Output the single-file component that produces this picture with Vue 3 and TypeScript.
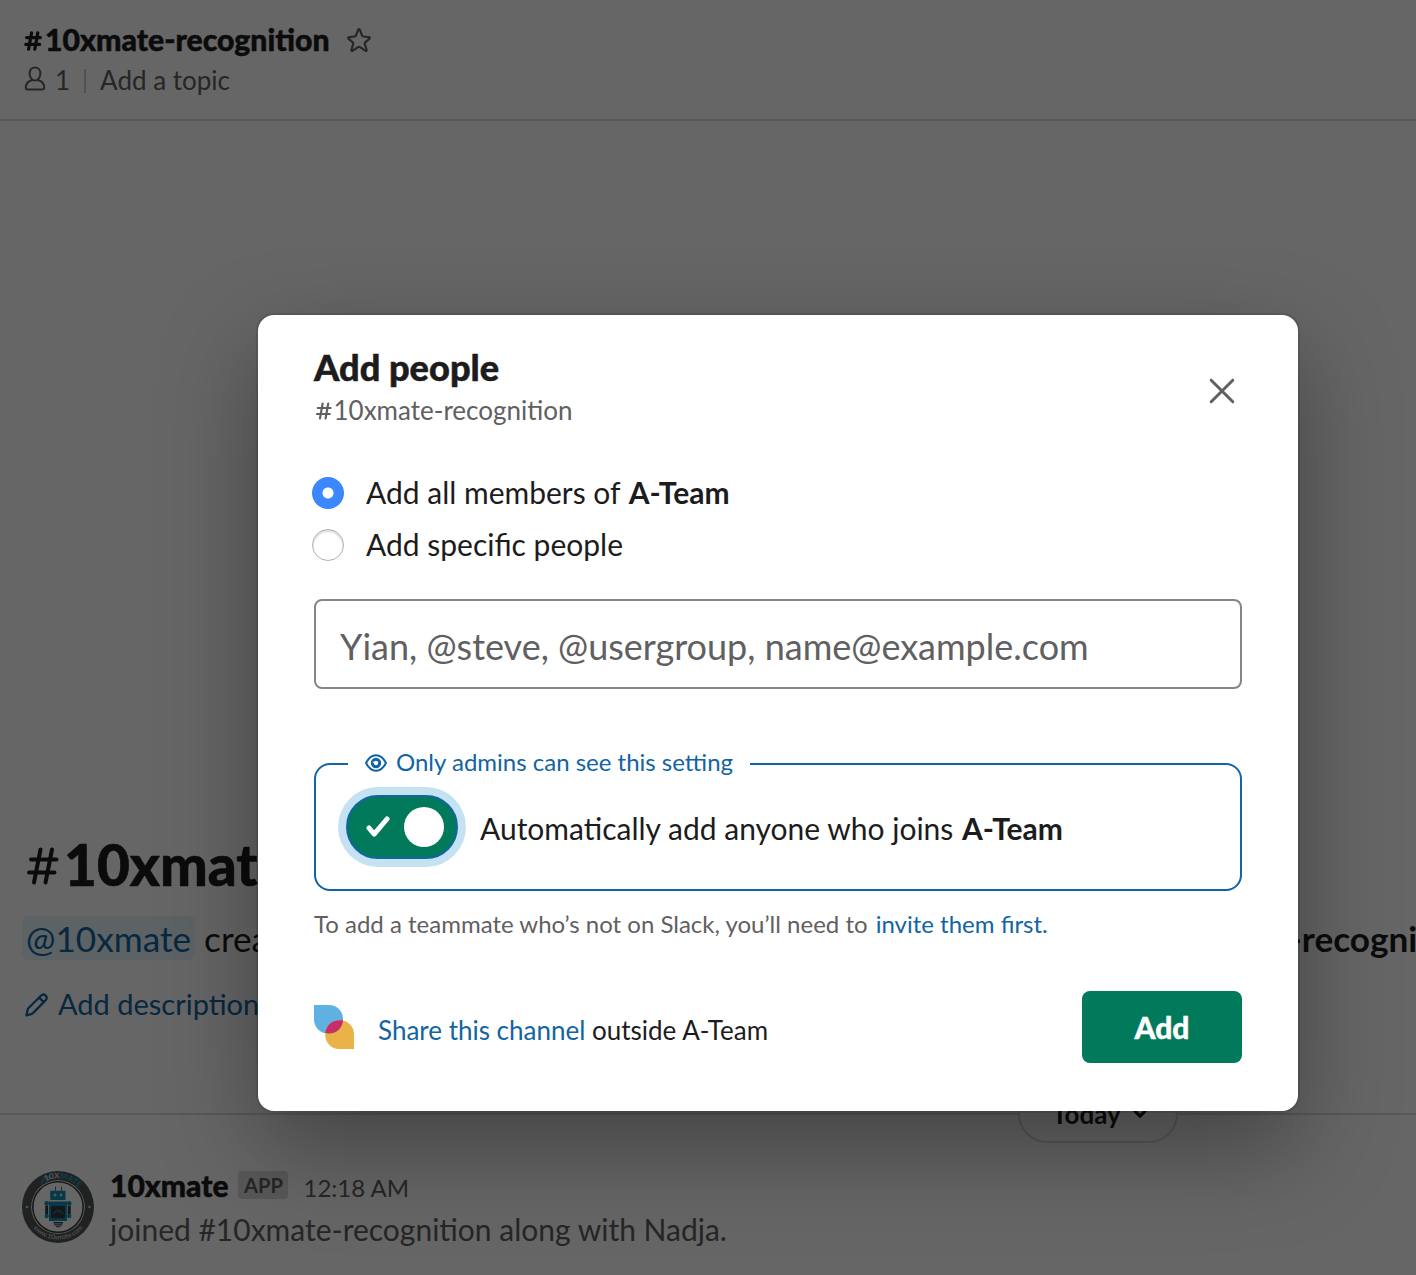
<script setup lang="ts">
import { ref } from 'vue'

const channel = '10xmate-recognition'
const team = 'A-Team'
const audience = ref<'all' | 'specific'>('all')
const autoAdd = ref(true)
const people = ref('')
</script>

<template>
  <div class="app">
    <div class="workspace">
      <header class="channel-header">
        <div class="channel-name">
          <svg class="hash" width="18" height="20" viewBox="0 0 18 20"><path d="M7.600 1.800 4.600 18.200M13.800 1.800 10.800 18.200M2.600 6.600H16.400M1.800 13.400H15.600" /></svg>
          <span>{{ channel }}</span>
          <svg class="star" width="26" height="26" viewBox="0 0 26 26"><path d="M12.100 2.900Q13 1.400 13.900 2.900L16.100 8.600Q16.400 9.400 17.200 9.500L22.700 10.100Q24.700 10.400 23.300 11.900L19.200 15.300Q18.500 16 18.700 16.900L20.600 22.500Q21 24.500 19.200 23.700L14 20.200Q13 19.500 12 20.200L6.800 23.700Q5 24.500 5.400 22.500L7.300 16.900Q7.500 16 6.800 15.300L2.700 11.900Q1.300 10.400 3.300 10.100L8.800 9.500Q9.600 9.400 9.900 8.600Z" /></svg>
        </div>
        <div class="channel-meta">
          <svg width="22" height="26" viewBox="0 0 22 26"><path d="M11 1.500C7.800 1.500 5.600 4 5.600 7.400c0 3.600 2.400 7.200 5.400 7.200s5.400-3.600 5.400-7.200C16.400 4 14.200 1.500 11 1.500ZM7.600 14.200C4 15.300 1.800 17.800 1.800 21.600c0 1.200.7 1.900 1.900 1.900h14.600c1.200 0 1.900-.7 1.900-1.900 0-3.800-2.200-6.300-5.800-7.400" /></svg>
          <span class="count">1</span>
          <i class="sep"></i>
          <span>Add a topic</span>
        </div>
      </header>

      <section class="intro">
        <h1>
          <svg width="32" height="38" viewBox="0 0 32 38"><path d="M13.500 2.500 7 35.500M25 2.500 18.500 35.500M4 12.500H29.500M2 25.500H27.500" /></svg>
          <span>{{ channel }}</span>
        </h1>
        <p class="created">
          <span><a class="mention">@10xmate</a> created this channel today.</span>
          <strong>#{{ channel }}</strong>
        </p>
        <p class="describe">
          <svg width="24" height="24" viewBox="0 0 24 24"><path d="M1.400 22.400 2.600 16.800Q2.900 15.600 3.800 14.700L15.900 2.800c1.700-1.600 3.300-1.600 4.700-.2 1.500 1.500 1.500 3.100-.2 4.800L8.500 19.600Q7.600 20.600 6.200 21.100ZM14.200 4.600 18.800 9.200" /></svg>
          <span>Add description</span>
        </p>
      </section>

      <div class="day-divider">
        <div class="day-pill">
          Today
          <svg width="14" height="10" viewBox="0 0 14 10"><path d="M1.800 2 7 7.200 12.200 2" /></svg>
        </div>
      </div>

      <article class="message">
        <svg class="avatar" width="72" height="72" viewBox="0 0 72 72">
          <defs>
            <path id="arc-top" d="M7.500 36A28.500 28.500 0 0 1 64.500 36" />
            <path id="arc-bottom" d="M3.500 36A32.500 32.500 0 0 0 68.500 36" />
          </defs>
          <circle cx="36" cy="36" r="36" fill="#505555" />
          <circle cx="36" cy="36" r="26.800" fill="#fff" />
          <circle cx="36" cy="36" r="25.200" fill="none" stroke="#3c4040" stroke-width="1.600" />
          <path d="M19.500 11.500 23.500 5.500 24.500 8 27.500 4.500V8.500" fill="none" stroke="#18a4c8" stroke-width="1.500" />
          <text class="badge-name" text-anchor="middle"><textPath href="#arc-top" startOffset="56%"><tspan fill="#ddd">10X</tspan><tspan fill="#18a4c8">MATE</tspan></textPath></text>
          <text class="badge-url" text-anchor="middle" fill="#ddd"><textPath href="#arc-bottom" startOffset="50%">www.10xmate.com</textPath></text>
          <circle cx="5" cy="36" r="1.300" fill="#9ed9f0" /><circle cx="67.500" cy="36" r="1.300" fill="#9ed9f0" />
          <g fill="#1690b4">
            <path d="M33 15.500h1v4.200h5v-4.200h1v4.200h3.500V29H28.200v-9.300H33zM27 30.500h18v5H27zM27 47h18v3H27zM27 35h2v13h-2zM43 35h2v13h-2z" />
            <circle cx="24.700" cy="32.300" r="2.300" /><circle cx="47.200" cy="32.300" r="2.300" />
            <circle cx="24.700" cy="45" r="2.200" /><circle cx="47.200" cy="45" r="2.200" />
          </g>
          <g fill="#343b3e"><path d="M29 35h14v12.300H29zM23.200 34.500h3v8.500h-3zM45.700 34.500h3v8.500h-3zM31.500 51h9.500v1.500h-9.500zM32.200 53.200h8v1.300h-8zM34 55.200h4.500v1H34z" /></g>
          <path d="m31.500 43 3.300-4.200 1.500 2.600 1.900-2.400 2.600 4" fill="none" stroke="#1690b4" />
          <circle cx="33" cy="24" r="1.400" fill="#bce6f2" /><circle cx="39" cy="24" r="1.400" fill="#bce6f2" />
        </svg>
        <div class="message-body">
          <div class="message-head">
            <b>10xmate</b><span class="app-tag">APP</span><time>12:18 AM</time>
          </div>
          <p>joined #{{ channel }} along with Nadja.</p>
        </div>
      </article>
    </div>

    <div class="overlay"></div>

    <div class="modal" role="dialog">
      <header class="modal-head">
        <div>
          <h2>Add people</h2>
          <div class="modal-channel">
            <svg width="16" height="18" viewBox="0 0 16 18"><path d="M6.600 1.600 4 16.400M12.200 1.600 9.600 16.400M1.800 6H14.600M1 12H13.800" /></svg>
            <span>{{ channel }}</span>
          </div>
        </div>
        <svg class="close" width="26" height="26" viewBox="0 0 26 26"><path d="M2.200 2.200 23.800 23.800M23.800 2.200 2.200 23.800" /></svg>
      </header>

      <div class="choices">
        <label class="choice" @click="audience = 'all'">
          <span class="radio" :class="{ on: audience === 'all' }"></span>
          <span class="choice-text">Add all members of <b>{{ team }}</b></span>
        </label>
        <label class="choice" @click="audience = 'specific'">
          <span class="radio" :class="{ on: audience === 'specific' }"></span>
          <span class="choice-text">Add specific people</span>
        </label>
      </div>

      <input v-model="people" class="people" type="text" placeholder="Yian, @steve, @usergroup, name@example.com" />

      <div class="admin-box">
        <div class="admin-legend">
          <svg width="22" height="18" viewBox="0 0 22 18"><path d="M1 9C3.600 4 7 1.300 11 1.300S18.400 4 21 9C18.400 14 15 16.700 11 16.700S3.600 14 1 9Z" /><circle cx="11" cy="9" r="3.700" stroke-width="3" /><path d="M8.200 8.200 10.600 8.800" stroke="#fff" stroke-width="1" /></svg>
          <span>Only admins can see this setting</span>
        </div>
        <div class="toggle-row">
          <button class="toggle" type="button" role="switch" :aria-checked="autoAdd" @click="autoAdd = !autoAdd">
            <svg width="24" height="22" viewBox="0 0 24 22"><path d="M3 12 8.200 18.200 21 3" /></svg>
            <span class="knob"></span>
          </button>
          <span class="auto-text">Automatically add anyone who joins <b>{{ team }}</b></span>
        </div>
      </div>

      <p class="hint">To add a teammate who’s not on Slack, you’ll need to <a>invite them first.</a></p>

      <footer class="modal-foot">
        <svg width="40" height="44" viewBox="0 0 40 44">
          <path fill="#5fb1e1" d="M0 0H15A14 14 0 0 1 29 14V15A14 14 0 0 1 15 28.500H14A14 14 0 0 1 0 14.500Z" />
          <path fill="#e9b347" d="M40 44H25.500A14 14 0 0 1 11.200 30V29A14 14 0 0 1 25.500 15.200H26A14 14 0 0 1 40 29.500Z" />
          <path fill="#c52e66" d="M11.200 28.100C12 20.500 18 15.200 25.500 15.200H29C28.500 22.500 23 28.500 15 28.500Q13 28.500 11.200 28.100Z" />
        </svg>
        <p><a>Share this channel</a> outside {{ team }}</p>
        <button class="add" type="button">Add</button>
      </footer>
    </div>
  </div>
</template>

<style>
body { background: #666; }
</style>

<style scoped>
* { box-sizing: border-box; }
.app {
  position: relative;
  width: 1416px;
  height: 1275px;
  overflow: hidden;
  background: #fff;
  color: #1d1c1d;
  font: 400 30px/44px Lato, "Liberation Sans", sans-serif;
}
h1, h2, p { margin: 0; }
svg { flex: none; fill: none; stroke: none; stroke-linecap: round; stroke-linejoin: round; }
a { color: #1264a3; }
b, strong { font-weight: 700; }
.overlay { position: absolute; inset: 0; background: rgba(0, 0, 0, .6); }
.workspace { display: flex; flex-direction: column; height: 100%; }

.channel-header { height: 121px; padding: 20px 24px 0; border-bottom: 2px solid #ddd; }
.channel-name { display: flex; align-items: center; height: 38px; font-size: 30.200px; font-weight: 900; -webkit-text-stroke: .5px; }
.hash { margin: 4px 3px 0 0; stroke: #1d1c1d; stroke-width: 3.200; }
.star { margin: 2px 0 0 16px; stroke: #616061; stroke-width: 2.200; }
.channel-meta { display: flex; align-items: center; height: 44px; color: #616061; font-size: 26px; }
.channel-meta svg { margin-bottom: 3px; stroke: #616061; stroke-width: 2; }
.count { margin-left: 9px; }
.sep { width: 2px; height: 24px; margin: 2px 14px 0; background: #ccc; }

.intro { padding: 710px 0 0 24px; white-space: nowrap; }
h1 { display: flex; align-items: center; height: 66px; font-size: 56.700px; font-weight: 900; -webkit-text-stroke: .6px; }
h1 svg { margin: 4px 5px 0 3px; stroke: #1d1c1d; stroke-width: 4; }
.created { display: flex; justify-content: space-between; width: 1458px; margin: 18px 0 0 -2px; font-size: 35.200px; line-height: 46px; }
.mention { padding: 1px 4px; border-radius: 6px; background: #e8f5fa; }
.describe { display: flex; align-items: center; height: 44px; margin-top: 21px; color: #1264a3; font-size: 29px; }
.describe svg { margin: 1px 9px 0 1px; stroke: #1264a3; stroke-width: 2.300; }

.day-divider { display: flex; height: 58px; margin-top: 59px; background: linear-gradient(#ddd, #ddd) 0 28px / 100% 2px no-repeat; }
.day-pill { display: flex; align-items: center; gap: 12px; width: 160px; height: 58px; margin-left: 1018px; padding-left: 32px; border: 2px solid #ddd; border-radius: 29px; background: #fff; font-size: 26px; font-weight: 700; }
.day-pill svg { stroke: #1d1c1d; stroke-width: 3.200; }

.message { display: flex; gap: 16px; padding: 20px 22px 0; }
.avatar { margin-top: 8px; }
.badge-name { font: 700 8px Lato, sans-serif; }
.badge-url { font: 400 6.600px Lato, sans-serif; }
.message-head { display: flex; align-items: center; height: 44px; }
.message-head b { font-weight: 900; -webkit-text-stroke: .5px; }
.app-tag { width: 50px; height: 28px; margin: 0 16px 0 10px; border-radius: 4px; background: #ddd; color: #616061; font-size: 20.200px; font-weight: 700; line-height: 29px; text-align: center; }
time { padding-top: 5px; margin-left: -1px; color: #616061; font-size: 24px; line-height: 48px; }
.message p { color: #616061; }

.modal {
  position: absolute;
  left: 258px;
  top: 315px;
  width: 1040px;
  height: 796px;
  padding: 29px 56px 0;
  border-radius: 16px;
  background: #fff;
  box-shadow: 0 0 0 2px rgba(29, 28, 29, .13), 0 36px 96px rgba(0, 0, 0, .35);
}
.modal-head { display: flex; justify-content: space-between; height: 127px; }
h2 { font-size: 36.200px; font-weight: 900; line-height: 46px; -webkit-text-stroke: .5px; }
.modal-channel { display: flex; align-items: center; height: 39px; margin-left: 2px; color: #616061; font-size: 26px; }
.modal-channel svg { margin: 2px 1.500px 0 0; stroke: #616061; stroke-width: 2.200; }
.close { margin: 34px 7px 0 0; stroke: #616061; stroke-width: 3; }
.choices { display: flex; flex-direction: column; gap: 8px; margin-left: -2px; }
.choice { display: flex; align-items: center; height: 44px; gap: 22px; }
.choice-text { padding-bottom: 3px; }
.choice-text b, .auto-text b { margin-left: 1px; }
.radio { width: 32px; height: 32px; border: 1.500px solid #b0b0b0; border-radius: 50%; box-shadow: inset 0 2px 2px rgba(0, 0, 0, .15); }
.radio.on { border: 0; background: radial-gradient(circle, #fff 5px, #3a87fe 6px); box-shadow: none; }
.people { display: block; width: 928px; height: 90px; margin-top: 32px; padding: 3px 24px 0; border: 2px solid #868686; border-radius: 8px; outline: 0; font: 400 36px/48px Lato, sans-serif; }
.people::placeholder { color: #616061; opacity: 1; }
.admin-box { height: 128px; margin-top: 74px; border: 2px solid #1264a3; border-radius: 16px; }
.admin-legend { display: flex; align-items: center; gap: 9px; width: 402px; height: 36px; margin: -20px 0 0 32px; padding-left: 17px; background: #fff; color: #1264a3; font-size: 24px; white-space: nowrap; }
.admin-legend span { padding-bottom: 2px; }
.admin-legend svg { stroke: #1264a3; stroke-width: 2; }
.toggle-row { display: flex; align-items: center; height: 64px; margin: 14px 0 0 30px; }
.toggle { display: flex; align-items: center; justify-content: space-between; width: 112px; height: 64px; padding: 0 12px 0 18px; border: 2px solid #1264a3; border-radius: 32px; background: #007a5a; box-shadow: 0 0 0 8px #c4e2f1; }
.toggle svg { stroke: #fff; stroke-width: 5; }
.knob { width: 40px; height: 40px; border-radius: 50%; background: #fff; }
.auto-text { margin: 1px 0 0 22px; white-space: nowrap; }
.hint { margin-top: 15px; color: #616061; font-size: 24px; line-height: 36px; }
.hint a { margin-left: 2px; }
.modal-foot { display: flex; align-items: center; height: 72px; margin-top: 49px; font-size: 26px; }
.modal-foot p { margin: 5px 0 0 24px; }
.add { width: 160px; height: 72px; margin-left: auto; padding: 0; border: 0; border-radius: 8px; background: #007a5a; color: #fff; font: 900 30px/40px Lato, sans-serif; -webkit-text-stroke: .4px; }
</style>
